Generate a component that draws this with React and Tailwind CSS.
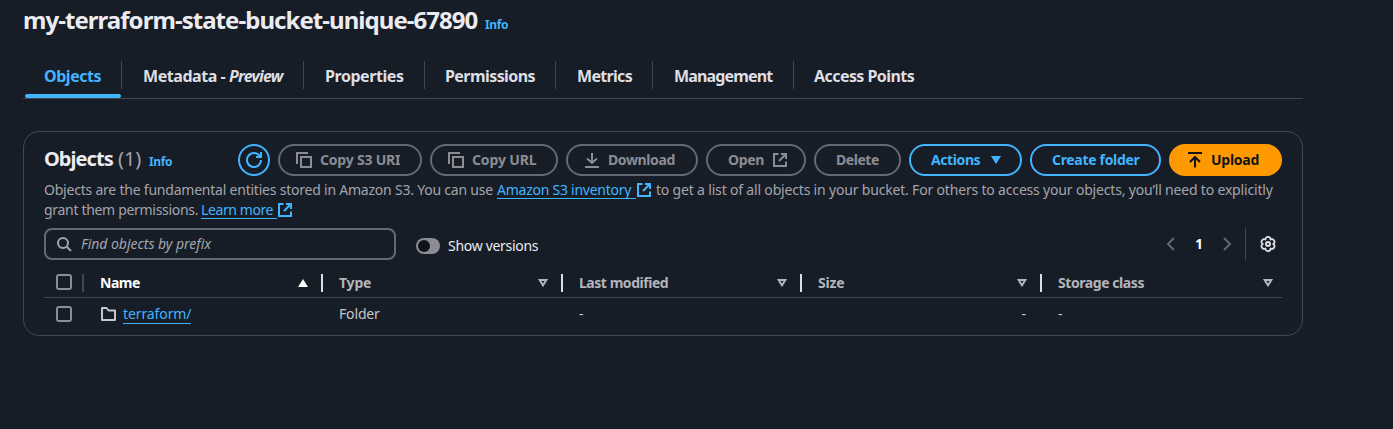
function Svg({ className = "", children }) {
  return (
    <svg width="16" height="16" viewBox="0 0 16 16" fill="none" stroke="currentColor" strokeWidth="2" className={"shrink-0 " + className}>
      {children}
    </svg>
  );
}

const External = ({ className }) => (
  <Svg className={className}>
    <path d="M6.5 2H2v12h12V9.5" />
    <path d="M9 2h5v5M14 2 7 9" />
  </Svg>
);
const Copy = () => (
  <Svg>
    <path d="M5 5h10v10H5z" />
    <path d="M1 12V1h11" />
  </Svg>
);
const Download = () => (
  <Svg>
    <path d="M1 15h14M8 1v10M3 6.5 8 11l5-4.5" />
  </Svg>
);
const Upload = () => (
  <Svg>
    <path d="M1 1h14M8 15.500V5M3 10 8 5l5 5" />
  </Svg>
);
const Refresh = () => (
  <Svg>
    <path d="M15 8a7 7 0 1 1-1.500-4.300L15 5" />
    <path d="M10 5h5V0" />
  </Svg>
);
const Search = () => (
  <Svg>
    <circle cx="7" cy="7" r="5" />
    <path d="m10.500 10.500 4.500 4.500" />
  </Svg>
);
const Folder = () => (
  <Svg>
    <path d="M2 14V2h4.500l2 2.500H15V14Z" strokeLinejoin="round" />
  </Svg>
);
const Gear = () => (
  <Svg>
    <path
      d="M13.200 8A2.600 2.600 0 0 1 10.600 12.500 2.600 2.600 0 0 1 5.400 12.500 2.600 2.600 0 0 1 2.800 8 2.600 2.600 0 0 1 5.400 3.500 2.600 2.600 0 0 1 10.600 3.500 2.600 2.600 0 0 1 13.200 8Z"
      strokeLinejoin="round"
      strokeWidth="1.800"
    />
    <circle cx="8" cy="8" r="2" />
  </Svg>
);
const SortUp = () => (
  <svg width="10" height="8" viewBox="0 0 10 8" className="shrink-0">
    <path d="M5 0 10 8H0Z" fill="currentColor" />
  </svg>
);
const SortDown = () => (
  <svg width="10" height="8" viewBox="0 0 10 8" className="shrink-0">
    <path d="M1.600 1h6.800L5 6.300Z" fill="none" stroke="currentColor" strokeWidth="2" />
  </svg>
);

const tabs = [
  { label: "Metadata - ", em: "Preview", cls: "w-[182px] pl-[21px] tracking-[-0.44px]" },
  { label: "Properties", cls: "w-[121px] pl-[21px] tracking-[-0.44px]" },
  { label: "Permissions", cls: "w-[131px] pl-[20px] tracking-[-0.57px]" },
  { label: "Metrics", cls: "w-[97px] pl-[21px] tracking-[-0.68px]" },
  { label: "Management", cls: "w-[141px] pl-[21px] tracking-[-0.85px]" },
  { label: "Access Points", cls: "w-[142px] pl-[20px] tracking-[-0.56px]", last: true },
];

function Button({ tone = "off", className = "", children }) {
  const tones = {
    off: "border-[#656871] text-[#8c8c94]",
    link: "border-[#42b4ff] text-[#42b4ff]",
    primary: "border-[#ff9900] bg-[#ff9900] text-[#0f141a]",
  };
  return (
    <button className={"flex h-8 shrink-0 items-center gap-2 rounded-full border-2 text-sm font-bold whitespace-nowrap " + tones[tone] + " " + className}>
      {children}
    </button>
  );
}

const Checkbox = () => <span className="ml-3 block size-4 rounded-[3px] border-2 border-[#8c8c94]" />;

const columns = [
  { label: "Name", cls: "pr-[13px] text-white tracking-[-0.5px]", sorted: true },
  { label: "Type", cls: "pr-[13px] tracking-[-0.2px]" },
  { label: "Last modified", cls: "pr-[13px] tracking-[-0.46px]" },
  { label: "Size", cls: "pr-[13px] tracking-[-0.2px]" },
  { label: "Storage class", cls: "pr-[9px] tracking-[-0.43px]", last: true },
];

const gridCols = "grid grid-cols-[40px_239px_240px_239px_240px_240px]";

export default function App() {
  return (
    <div className="h-[429px] w-full overflow-hidden bg-[#161d26] pl-[23px] font-['Noto_Sans',sans-serif] text-sm text-[#c6c6cd]">
      <div className="w-[1280px]">
        <header className="flex h-[61px] items-start pt-[5px]">
          <h1 className="w-[462px] text-2xl leading-[30px] font-bold tracking-[-0.95px] whitespace-nowrap text-[#ebebf0]">my-terraform-state-bucket-unique-67890</h1>
          <a className="pt-[12px] text-xs leading-4 font-bold tracking-[-0.4px] text-[#42b4ff]">Info</a>
        </header>

        <nav className="flex h-[38px] border-b border-[#424650] text-base font-bold text-[#dedee3]">
          <div className="flex w-[99px] flex-col justify-between">
            <div className="flex h-7 items-center border-r border-[#424650] pt-px pl-[21px] tracking-[-0.47px] text-[#42b4ff]">Objects</div>
            <div className="mr-px ml-[2px] h-1 rounded-full bg-[#42b4ff]" />
          </div>
          {tabs.map((t) => (
            <div key={t.label} className={"flex h-7 items-center pt-px whitespace-pre " + t.cls + (t.last ? "" : " border-r border-[#424650]")}>
              {t.label}
              {t.em && <em className="tracking-[-0.75px]">{t.em}</em>}
            </div>
          ))}
        </nav>

        <section className="mt-[32px] h-[205px] rounded-[16px] border border-[#424650] px-5 pt-3">
          <div className="flex h-8 items-center gap-2">
            <div className="flex h-[34px] flex-1 items-baseline pt-px">
              <h2 className="w-[74px] text-xl leading-[30px] font-bold tracking-[-0.95px] text-[#ebebf0]">Objects</h2>
              <span className="w-[31px] text-xl leading-[30px] tracking-[-0.1px] text-[#a4a4ad]">(1)</span>
              <a className="text-xs font-bold tracking-[-0.4px] text-[#42b4ff]">Info</a>
            </div>
            <Button tone="link" className="w-8 justify-center"><Refresh /></Button>
            <Button className="w-36 pl-4 tracking-[-0.2px]"><Copy />Copy S3 URI</Button>
            <Button className="w-32 pl-4 tracking-[-0.13px]"><Copy />Copy URL</Button>
            <Button className="w-[132px] pl-4 tracking-[-0.38px]"><Download />Download</Button>
            <Button className="w-[100px] pl-5 tracking-[-0.35px]">Open<External /></Button>
            <Button className="w-[87px] pl-5 tracking-[-0.45px]">Delete</Button>
            <Button tone="link" className="w-[113px] gap-[11px] pl-5 tracking-[-0.4px]">
              Actions
              <svg width="10" height="8" viewBox="0 0 10 8"><path d="M0 0h10L5 8Z" fill="currentColor" /></svg>
            </Button>
            <Button tone="link" className="w-[131px] pl-5 tracking-[-0.32px]">Create folder</Button>
            <Button tone="primary" className="w-[113px] pl-4 tracking-[-0.27px]"><Upload />Upload</Button>
          </div>

          <div className="mt-1 text-sm leading-5 whitespace-nowrap text-[#a4a4ad]">
            <div className="flex">
              <span className="w-[453px] tracking-[-0.22px]">Objects are the fundamental entities stored in Amazon S3. You can use</span>
              <a className="mb-px h-[19px] w-[139px] border-b border-[#42b4ff] tracking-[-0.25px] text-[#42b4ff]">Amazon S3 inventory</a>
              <External className="mt-[2px] mr-[4px] text-[#42b4ff]" />
              <span className="tracking-[-0.18px]">to get a list of all objects in your bucket. For others to access your objects, you’ll need to explicitly</span>
            </div>
            <div className="flex">
              <span className="w-[157px] tracking-[-0.31px]">grant them permissions.</span>
              <a className="h-[19px] w-[76px] border-b border-[#42b4ff] tracking-[-0.4px] text-[#42b4ff]">Learn more</a>
              <External className="mt-[2px] text-[#42b4ff]" />
            </div>
          </div>

          <div className="mt-2 flex h-8 items-center">
            <div className="flex h-8 w-[352px] items-center gap-[9px] rounded-lg border-2 border-[#656871] pl-[10px] text-[#a4a4ad]">
              <Search />
              <span className="tracking-[-0.03px] italic">Find objects by prefix</span>
            </div>
            <div className="mt-1 ml-5 flex items-center gap-2">
              <span className="flex h-4 w-6 items-center rounded-full bg-[#8c8c94] pl-[2px]">
                <span className="size-3 rounded-full bg-[#0f141a]" />
              </span>
              <span className="tracking-[-0.3px] text-[#ebebf0]">Show versions</span>
            </div>
            <div className="ml-auto flex h-8 items-center">
              <Svg className="text-[#656871]"><path d="m11 2-6 6 6 6" /></Svg>
              <span className="w-10 text-center font-bold text-white">1</span>
              <Svg className="text-[#656871]"><path d="m5 2 6 6-6 6" /></Svg>
              <span className="mr-[14px] ml-[10px] h-8 w-px bg-[#424650]" />
              <span className="mr-[6px] flex text-[#dedee3]"><Gear /></span>
            </div>
          </div>

          <div className={gridCols + " mt-2 h-[30px] border-b border-[#424650] pt-[6px] font-bold text-[#b4b4bb]"}>
            <div className="flex h-[18px] items-center border-r-2 border-[#424650] pb-[2px]"><Checkbox /></div>
            {columns.map((c) => (
              <div key={c.label} className={"flex h-[18px] items-center justify-between pl-4 " + c.cls + (c.last ? "" : " border-r-2 border-[#dedee3]")}>
                {c.label}
                {c.sorted ? <SortUp /> : <SortDown />}
              </div>
            ))}
          </div>
          <div className={gridCols + " h-8 items-center"}>
            <Checkbox />
            <div className="flex items-center gap-[7px] pl-4">
              <Folder />
              <a className="h-[20px] border-b border-[#42b4ff] leading-5 tracking-[-0.1px] text-[#42b4ff]">terraform/</a>
            </div>
            <span className="pl-4 tracking-[-0.15px]">Folder</span>
            <span className="pl-4">-</span>
            <span className="pr-4 text-right">-</span>
            <span className="pl-4">-</span>
          </div>
        </section>
      </div>
    </div>
  );
}
